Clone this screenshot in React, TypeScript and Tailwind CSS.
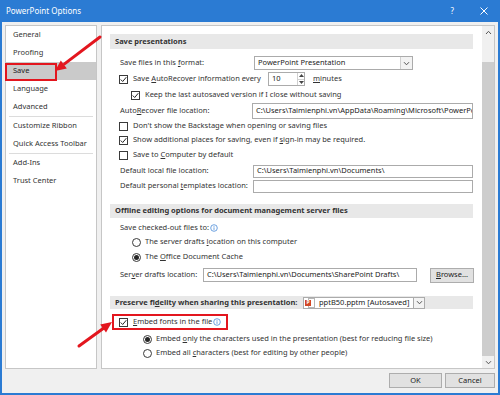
import React from 'react';

type Kids = { children?: React.ReactNode };

const U = ({ children }: Kids) => <span className="underline underline-offset-[1px]">{children}</span>;

const Check = ({ checked }: { checked?: boolean }) => (
  <span className="w-[9px] h-[9px] border border-[#3a3a3a] bg-white flex items-center justify-center shrink-0">
    {checked && (
      <svg width="7" height="7" viewBox="0 0 7 7">
        <path d="M0.7 3.5 L2.7 5.5 L6.3 1.2" fill="none" stroke="#262626" strokeWidth="1" />
      </svg>
    )}
  </span>
);

const Radio = ({ on }: { on?: boolean }) => (
  <span className="w-[9px] h-[9px] rounded-full border border-[#3a3a3a] bg-white flex items-center justify-center shrink-0">
    {on && <span className="w-[5px] h-[5px] rounded-full bg-[#262626]" />}
  </span>
);

const Info = () => (
  <svg width="8" height="8" viewBox="0 0 8 8" className="ml-[1px] shrink-0">
    <circle cx="4" cy="4" r="3.3" fill="none" stroke="#4a8ad8" strokeWidth="0.8" />
    <rect x="3.6" y="3.3" width="0.8" height="2.6" fill="#4a8ad8" />
    <rect x="3.6" y="2" width="0.8" height="0.8" fill="#4a8ad8" />
  </svg>
);

const Chevron = ({ up }: { up?: boolean }) => (
  <svg width="7" height="5" viewBox="0 0 7 5">
    <path d={up ? 'M1 4 L3.5 1.3 L6 4' : 'M1 1.2 L3.5 3.8 L6 1.2'} fill="none" stroke="#555" strokeWidth="1" />
  </svg>
);

const Field = ({ children, className = '' }: Kids & { className?: string }) => (
  <div className={`min-w-0 border border-[#ababab] bg-white px-[3px] flex items-center overflow-hidden whitespace-nowrap ${className}`}>
    {children}
  </div>
);

const Header = ({ children, className = '' }: Kids & { className?: string }) => (
  <div className={`bg-[#e8e8e8] pl-[5px] flex items-center font-bold text-[#333] whitespace-nowrap ${className}`}>
    {children}
  </div>
);

const Row = ({ children, className = '' }: Kids & { className?: string }) => (
  <div className={`h-[14px] flex items-center whitespace-nowrap ${className}`}>{children}</div>
);

const navTop = ['General', 'Proofing', 'Save', 'Language', 'Advanced'];
const navMid = ['Customize Ribbon', 'Quick Access Toolbar'];
const navEnd = ['Add-Ins', 'Trust Center'];

function NavItem({ label }: { label: string }) {
  const active = label === 'Save';
  return (
    <div className={`relative h-[18px] pl-[7px] flex items-center ${active ? 'bg-[#cacaca] text-[#222]' : ''}`}>
      {label}
      {active && <span className="absolute left-[-1px] top-[1px] w-[52px] h-[18px] border-2 border-[#e3161e]" />}
    </div>
  );
}

export default function App() {
  return (
    <div className="relative w-[500px] h-[395px] bg-[#2b7bd3] flex flex-col font-['Noto_Sans',sans-serif] text-[7.5px] leading-none text-[#333]">
      {/* title bar */}
      <div className="h-[22px] flex items-center pl-[6px] pr-[12px] text-white text-[8px]">
        <span className="flex-1">PowerPoint Options</span>
        <span className="mr-[26px] text-[8px]">?</span>
        <svg width="8" height="8" viewBox="0 0 8 8">
          <path d="M0.5 0.5 L7.5 7.5 M7.5 0.5 L0.5 7.5" stroke="#fff" strokeWidth="1" />
        </svg>
      </div>

      <div className="flex-1 mx-[2px] mb-[2px] bg-[#f0f0f0] flex flex-col px-[3px] pt-[3px]">
        <div className="h-[344px] flex gap-[4px]">
          {/* left nav */}
          <div className="w-[92px] shrink-0 bg-white border border-[#c6c6c6]">
            {navTop.map((l) => <NavItem key={l} label={l} />)}
            <div className="mx-[3px] h-px bg-[#dcdcdc]" />
            {navMid.map((l) => <NavItem key={l} label={l} />)}
            <div className="mx-[3px] h-px bg-[#dcdcdc]" />
            {navEnd.map((l) => <NavItem key={l} label={l} />)}
          </div>

          {/* right panel */}
          <div className="w-[394px] shrink-0 bg-white border border-[#c6c6c6] flex">
            <div className="flex-1 min-w-0 flex flex-col pl-[8px] pr-[9px]">
              <Header className="mt-[8px] h-[15px]">Save presentations</Header>

              <Row className="mt-[7px] pl-[10px]">
                <span className="w-[134px] shrink-0">Save files in this <U>f</U>ormat:</span>
                <div className="w-[159px] h-[14px] border border-[#ababab] bg-white flex items-center">
                  <span className="flex-1 pl-[3px] text-[#222]">PowerPoint Presentation</span>
                  <span className="w-[12px] h-full border-l border-[#d0d0d0] bg-[#f3f3f3] flex items-center justify-center">
                    <Chevron />
                  </span>
                </div>
              </Row>

              <Row className="mt-[2px] pl-[9px]">
                <span className="w-[149px] shrink-0 flex items-center gap-[5px]">
                  <Check checked />
                  <span>Save <U>A</U>utoRecover information every</span>
                </span>
                <div className="w-[37px] h-[14px] border border-[#ababab] bg-white flex items-center">
                  <span className="flex-1 pl-[3px] text-[#222]">10</span>
                  <span className="w-[7px] h-full flex flex-col border-l border-[#d0d0d0]">
                    <span className="flex-1 flex items-center justify-center">
                      <svg width="5" height="3" viewBox="0 0 5 3"><path d="M0 3 L2.5 0 L5 3 Z" fill="#444" /></svg>
                    </span>
                    <span className="flex-1 flex items-center justify-center border-t border-[#d0d0d0]">
                      <svg width="5" height="3" viewBox="0 0 5 3"><path d="M0 0 L2.5 3 L5 0 Z" fill="#444" /></svg>
                    </span>
                  </span>
                </div>
                <span className="ml-[8px]"><U>m</U>inutes</span>
              </Row>

              <Row className="mt-[2px] pl-[21px] gap-[5px]">
                <Check checked />
                <span>Keep the last autosaved version if I close without saving</span>
              </Row>

              <div className="mt-[1px] h-[16px] flex items-center pl-[10px] whitespace-nowrap">
                <span className="w-[132px] shrink-0">Auto<U>R</U>ecover file location:</span>
                <Field className="flex-1 h-[16px] text-[#222]">{'C:\\Users\\Taimienphi.vn\\AppData\\Roaming\\Microsoft\\PowerPoint\\'}</Field>
              </div>

              <Row className="pl-[9px] gap-[5px]">
                <Check />
                <span>Don't show the Backstage when opening or saving files</span>
              </Row>
              <Row className="pl-[9px] gap-[5px]">
                <Check checked />
                <span>Show additional places for saving, even if <U>s</U>ign-in may be required.</span>
              </Row>
              <Row className="mt-[1px] pl-[9px] gap-[5px]">
                <Check />
                <span>Save to <U>C</U>omputer by default</span>
              </Row>

              <Row className="mt-[2px] pl-[10px]">
                <span className="w-[133px] shrink-0">Default local f<U>i</U>le location:</span>
                <Field className="flex-1 h-[13px] text-[#222]">{'C:\\Users\\Taimienphi.vn\\Documents\\'}</Field>
              </Row>
              <Row className="mt-[1px] pl-[10px]">
                <span className="w-[133px] shrink-0">Default personal <U>t</U>emplates location:</span>
                <Field className="flex-1 h-[13px]" />
              </Row>

              <Header className="mt-[11px] h-[14px]">Offline editing options for document management server files</Header>

              <Row className="mt-[3px] pl-[10px]">
                <span>Save checked-out files to:</span>
                <Info />
              </Row>
              <Row className="pl-[22px] gap-[4px]">
                <Radio />
                <span>The server drafts <U>l</U>ocation on this computer</span>
              </Row>
              <Row className="mt-[1px] pl-[22px] gap-[4px]">
                <Radio on />
                <span>The <U>O</U>ffice Document Cache</span>
              </Row>

              <Row className="mt-[4px] pl-[10px]">
                <span className="w-[83px] shrink-0">Ser<U>v</U>er drafts location:</span>
                <Field className="w-[214px] shrink-0 h-[14px] text-[#222]">{'C:\\Users\\Taimienphi.vn\\Documents\\SharePoint Drafts\\'}</Field>
                <div className="ml-[13px] w-[44px] shrink-0 h-[15px] border border-[#adadad] bg-[#e1e1e1] flex items-center justify-center text-[#222]">
                  <span><U>B</U>rowse...</span>
                </div>
              </Row>

              <Header className="mt-[14px] h-[13px]">
                <span className="w-[188px] shrink-0">Preserve fi<U>d</U>elity when sharing this presentation:</span>
                <div className="w-[122px] h-[12px] border border-[#ababab] bg-white flex items-center font-normal text-[#222]">
                  <span className="relative ml-[1px] w-[10px] h-[10px] shrink-0">
                    <span className="absolute right-0 top-0 w-[7px] h-[10px] bg-white border border-[#b7b7b7]" />
                    <span className="absolute left-0 top-[2px] w-[6px] h-[6px] bg-[#d24726] text-white text-[5px] font-bold flex items-center justify-center">P</span>
                  </span>
                  <span className="flex-1 pl-[4px]">pptB50.pptm [Autosaved]</span>
                  <span className="w-[11px] h-full border-l border-[#ababab] bg-[#f3f3f3] flex items-center justify-center">
                    <Chevron />
                  </span>
                </div>
              </Header>

              <Row className="relative mt-[6px] pl-[9px] gap-[5px]">
                <Check checked />
                <span className="flex items-center">
                  <U>E</U>mbed fonts in the file
                  <Info />
                </span>
                <span className="absolute left-[2px] top-[-1px] w-[116px] h-[16px] border-2 border-[#e3161e]" />
              </Row>
              <Row className="mt-[3px] pl-[33px] gap-[4px]">
                <Radio on />
                <span>Embed <U>o</U>nly the characters used in the presentation (best for reducing file size)</span>
              </Row>
              <Row className="pl-[33px] gap-[4px]">
                <Radio />
                <span>Embed all <U>c</U>haracters (best for editing by other people)</span>
              </Row>
            </div>

            {/* scrollbar */}
            <div className="w-[12px] shrink-0 bg-[#f0f0f0] flex flex-col">
              <div className="h-[12px] flex items-center justify-center">
                <Chevron up />
              </div>
              <div className="h-[24px]" />
              <div className="flex-1 bg-[#cdcdcd]" />
              <div className="h-[12px] flex items-center justify-center">
                <Chevron />
              </div>
            </div>
          </div>
        </div>

        {/* buttons */}
        <div className="mt-[4px] flex justify-end gap-[3px]">
          <div className="w-[53px] h-[15px] border border-[#adadad] bg-[#e1e1e1] flex items-center justify-center text-[#222]">OK</div>
          <div className="w-[50px] h-[15px] border border-[#adadad] bg-[#e1e1e1] flex items-center justify-center text-[#222]">Cancel</div>
        </div>
      </div>

      {/* annotation arrows */}
      <svg className="absolute inset-0 pointer-events-none" width="500" height="395" viewBox="0 0 500 395">
        <line x1="100" y1="37" x2="64.5" y2="63.9" stroke="#e3161e" strokeWidth="3" strokeLinecap="round" />
        <polygon points="55,71 66.8,68.4 60.8,60.4" fill="#e3161e" />
        <line x1="79" y1="346" x2="103.5" y2="328.3" stroke="#e3161e" strokeWidth="3" strokeLinecap="round" />
        <polygon points="112,322 106,332.5 100.2,324.5" fill="#e3161e" />
      </svg>
    </div>
  );
}
